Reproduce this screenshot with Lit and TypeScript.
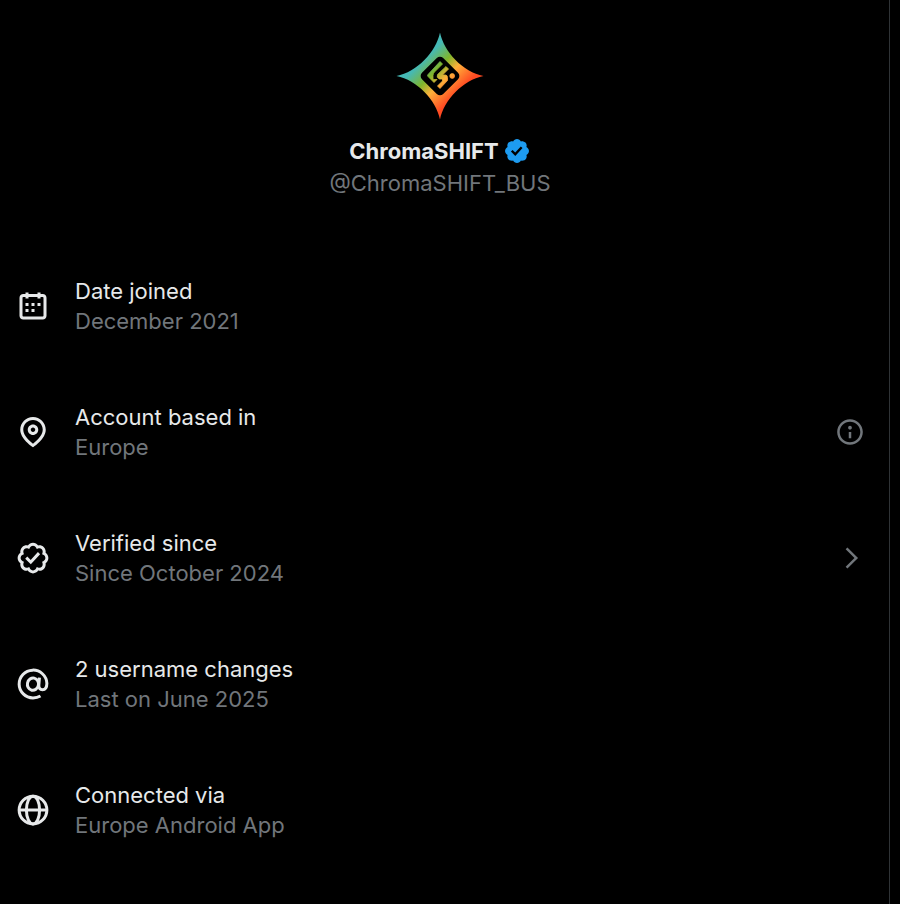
import { LitElement, html, css, svg, nothing, type TemplateResult } from "lit";
import { customElement } from "lit/decorators.js";

const calendarIcon = svg`<path d="M7 4V3h2v1h6V3h2v1h1.5C19.89 4 21 5.12 21 6.5v12c0 1.38-1.11 2.5-2.5 2.5h-13C4.12 21 3 19.88 3 18.5v-12C3 5.12 4.12 4 5.5 4H7zm0 2H5.5c-.27 0-.5.22-.5.5v12c0 .28.23.5.5.5h13c.28 0 .5-.22.5-.5v-12c0-.28-.22-.5-.5-.5H17v1h-2V6H9v1H7V6zm0 6h2v-2H7v2zm0 4h2v-2H7v2zm4-4h2v-2h-2v2zm0 4h2v-2h-2v2zm4-4h2v-2h-2v2z"/>`;
const pinIcon = svg`<path d="M12 7c-1.93 0-3.5 1.57-3.5 3.5S10.07 14 12 14s3.5-1.57 3.5-3.5S13.93 7 12 7zm0 5c-.827 0-1.5-.673-1.5-1.5S11.173 9 12 9s1.5.673 1.5 1.5S12.827 12 12 12zm0-10c-4.687 0-8.5 3.813-8.5 8.5 0 5.967 7.621 11.116 7.945 11.332l.555.37.555-.37c.324-.216 7.945-5.365 7.945-11.332C20.5 5.813 16.687 2 12 2zm0 17.77c-1.665-1.241-6.5-5.196-6.5-9.27C5.5 6.916 8.416 4 12 4s6.5 2.916 6.5 6.5c0 4.073-4.835 8.028-6.5 9.27z"/>`;
const sealIcon = svg`<path d="M8.52 3.59c.8-1.1 2.04-1.84 3.48-1.84s2.68.74 3.49 1.84c1.34-.21 2.74.14 3.76 1.16s1.37 2.42 1.16 3.77c1.1.8 1.84 2.04 1.84 3.48s-.74 2.68-1.84 3.48c.21 1.34-.14 2.75-1.16 3.77s-2.42 1.37-3.76 1.16c-.8 1.1-2.05 1.84-3.49 1.84s-2.68-.74-3.48-1.84c-1.34.21-2.75-.14-3.77-1.16-1.01-1.02-1.37-2.42-1.16-3.77-1.09-.8-1.84-2.04-1.84-3.48s.75-2.68 1.84-3.48c-.21-1.35.14-2.75 1.16-3.77s2.43-1.37 3.77-1.16zm3.48.16c-.85 0-1.66.53-2.12 1.43l-.38.77-.82-.27c-.96-.32-1.91-.12-2.51.49-.6.6-.8 1.54-.49 2.51l.27.81-.77.39c-.9.46-1.43 1.27-1.43 2.12s.53 1.66 1.43 2.12l.77.39-.27.81c-.31.97-.11 1.91.49 2.51.6.61 1.55.81 2.51.49l.82-.27.38.77c.46.9 1.27 1.43 2.12 1.43s1.66-.53 2.12-1.43l.39-.77.82.27c.96.32 1.9.12 2.51-.49.6-.6.8-1.55.48-2.51l-.26-.81.76-.39c.91-.46 1.43-1.27 1.43-2.12s-.52-1.66-1.43-2.12l-.77-.39.27-.81c.32-.97.12-1.91-.48-2.51-.61-.61-1.55-.81-2.51-.49l-.82.27-.39-.77c-.46-.9-1.27-1.43-2.12-1.43zm4.74 5.68l-6.2 6.77-3.74-3.74 1.41-1.42 2.26 2.26 4.8-5.23 1.47 1.36z"/>`;
const atIcon = svg`<g fill="none" stroke="currentColor" stroke-width="2"><path d="M17 20Q14.8 21.25 12 21.25A9.25 9.25 0 1 1 21.25 11.5C21.25 14.3 20.1 15.8 18.3 15.8C16.7 15.8 15.7 14.7 15.9 12.6L16.3 7.8"/><ellipse cx="12" cy="12.1" rx="3.7" ry="4.1" transform="rotate(12 12 12)"/></g>`;
const globeIcon = svg`<g fill="none" stroke="currentColor" stroke-width="2"><circle cx="12" cy="12" r="9.25"/><ellipse cx="12" cy="12" rx="4.4" ry="9.25"/><path d="M2.75 12h18.5"/></g>`;
const infoIcon = svg`<path d="M13.5 8.5c0 .83-.67 1.5-1.5 1.5s-1.5-.67-1.5-1.5S11.17 7 12 7s1.5.67 1.5 1.5zM13 17v-5h-2v5h2zm-1 5.25c5.66 0 10.25-4.59 10.25-10.25S17.66 1.75 12 1.75 1.75 6.34 1.75 12 6.34 22.25 12 22.25zM20.25 12c0 4.56-3.69 8.25-8.25 8.25S3.75 16.56 3.75 12 7.44 3.75 12 3.75s8.25 3.69 8.25 8.25z"/>`;
const chevronIcon = svg`<path d="M15.586 12L8.543 4.96l1.414-1.42L18.414 12l-8.457 8.46-1.414-1.42L15.586 12z"/>`;

interface Fact {
  icon: TemplateResult<2>;
  title: string;
  detail: string;
  action?: { label: string; icon: TemplateResult<2> };
}

const facts: Fact[] = [
  { icon: calendarIcon, title: "Date joined", detail: "December 2021" },
  { icon: pinIcon, title: "Account based in", detail: "Europe", action: { label: "About this location", icon: infoIcon } },
  { icon: sealIcon, title: "Verified since", detail: "Since October 2024", action: { label: "Verification details", icon: chevronIcon } },
  { icon: atIcon, title: "2 username changes", detail: "Last on June 2025" },
  { icon: globeIcon, title: "Connected via", detail: "Europe Android App" },
];

@customElement("app-root")
export class AppRoot extends LitElement {
  static styles = css`
    :host {
      display: block;
      min-height: 100vh;
      box-sizing: border-box;
      padding-right: 10px;
      background: #000;
      color: #e7e9ea;
      font: 22px/30px Inter, "Liberation Sans", sans-serif;
    }
    .column {
      min-height: 100vh;
      box-sizing: border-box;
      padding-right: 9px;
      border-right: 1px solid #2f3336;
    }
    .profile {
      display: flex;
      flex-direction: column;
      align-items: center;
      padding-top: 30px;
    }
    .avatar {
      width: 92px;
      height: 92px;
    }
    .name {
      display: flex;
      align-items: center;
      gap: 4px;
      margin: 14px 0 0;
      font-size: 22px;
      line-height: 30px;
      font-weight: 700;
    }
    .badge {
      width: 28px;
      height: 28px;
      fill: #1d9bf0;
    }
    .handle {
      margin: 2px 0 0;
      color: #71767b;
    }
    .facts {
      list-style: none;
      margin: 48px 0 0;
      padding: 0;
    }
    .fact {
      display: flex;
      align-items: center;
      gap: 24px;
      padding: 30px 15px 36px;
    }
    .icon {
      flex: none;
      width: 36px;
      height: 36px;
      fill: currentColor;
    }
    .text {
      flex: 1;
      min-width: 0;
    }
    .title,
    .detail {
      margin: 0;
    }
    .detail {
      color: #71767b;
    }
    .action {
      display: flex;
      padding: 0;
      border: 0;
      background: none;
      color: #71767b;
      cursor: pointer;
    }
    .small {
      width: 30px;
      height: 30px;
      fill: currentColor;
    }
  `;

  render() {
    return html`
      <main class="column">
        <header class="profile">
          <svg class="avatar" viewBox="0 0 92 92" role="img" aria-label="ChromaSHIFT logo">
            <defs>
              <linearGradient id="spectrum" gradientUnits="userSpaceOnUse" x1="22" y1="22" x2="70" y2="70">
                <stop offset="0.16" stop-color="#45b9b6" />
                <stop offset="0.4" stop-color="#7fb52c" />
                <stop offset="0.58" stop-color="#ffb03a" />
                <stop offset="0.86" stop-color="#ff4a22" />
              </linearGradient>
            </defs>
            <path fill="url(#spectrum)" d="M46 2.5C50 22 69 42 89.5 46C69 50 50 70 46 89.5C42 70 23 50 2.5 46C23 42 42 22 46 2.5Z" />
            <rect x="31" y="31" width="30" height="30" rx="4.5" transform="rotate(45 46 46)" />
            <g fill="url(#spectrum)" stroke="url(#spectrum)" stroke-width="0.8" stroke-linejoin="round">
              <path d="M46 31.5L48.5 34L40.5 42Q39 43.5 39 45.5V48.5Q39 49.5 40 49.5H43L40 52.5L34 46.5Q33 45.5 34 44.5Z" />
              <path d="M52 36.5L54.5 39L48.5 45H51.5Q53.5 45.2 53.5 47.5V50.5L46 58.5L43.5 56L48.5 51V49H45.5Q42 47.5 43.5 44.5Z" />
              <circle cx="58.2" cy="46" r="2.4" />
            </g>
          </svg>
          <h1 class="name">
            ChromaSHIFT
            <svg class="badge" viewBox="0 0 22 22" role="img" aria-label="Verified account">
              <path d="M20.396 11c-.018-.646-.215-1.275-.57-1.816-.354-.54-.852-.972-1.438-1.246.223-.607.27-1.264.14-1.897-.131-.634-.437-1.218-.882-1.687-.47-.445-1.053-.75-1.687-.882-.633-.13-1.29-.083-1.897.14-.273-.587-.704-1.086-1.245-1.44S11.647 1.62 11 1.604c-.646.017-1.273.213-1.813.568s-.969.854-1.24 1.44c-.608-.223-1.267-.272-1.902-.14-.635.13-1.22.436-1.69.882-.445.47-.749 1.055-.878 1.688-.13.633-.08 1.29.144 1.896-.587.274-1.087.705-1.443 1.245-.356.54-.555 1.17-.574 1.817.02.647.218 1.276.574 1.817.356.54.856.972 1.443 1.245-.224.606-.274 1.263-.144 1.896.13.634.433 1.218.877 1.688.47.443 1.054.747 1.687.878.633.132 1.29.084 1.897-.136.274.586.705 1.084 1.246 1.439.54.354 1.17.551 1.816.569.647-.016 1.276-.213 1.817-.567s.972-.854 1.245-1.44c.604.239 1.266.296 1.903.164.636-.132 1.22-.447 1.68-.907.46-.46.776-1.044.908-1.681s.075-1.299-.165-1.903c.586-.274 1.084-.705 1.439-1.246.354-.54.551-1.17.569-1.816zM9.662 14.85l-3.429-3.428 1.293-1.302 2.072 2.072 4.4-4.794 1.347 1.246z" />
            </svg>
          </h1>
          <p class="handle">@ChromaSHIFT_BUS</p>
        </header>
        <ul class="facts">
          ${facts.map(
            (fact) => html`
              <li class="fact">
                <svg class="icon" viewBox="0 0 24 24" aria-hidden="true">${fact.icon}</svg>
                <div class="text">
                  <p class="title">${fact.title}</p>
                  <p class="detail">${fact.detail}</p>
                </div>
                ${fact.action
                  ? html`<button class="action" type="button" aria-label=${fact.action.label}>
                      <svg class="small" viewBox="0 0 24 24" aria-hidden="true">${fact.action.icon}</svg>
                    </button>`
                  : nothing}
              </li>
            `
          )}
        </ul>
      </main>
    `;
  }
}
